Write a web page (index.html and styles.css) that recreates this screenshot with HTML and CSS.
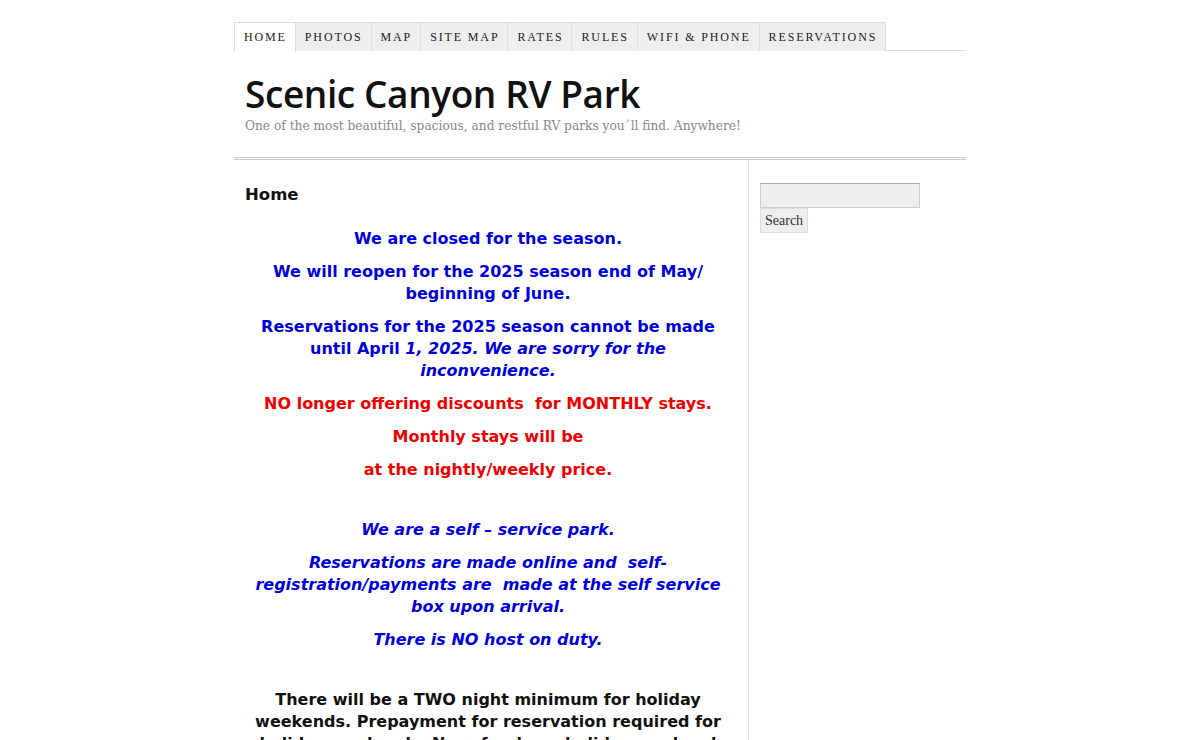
FILE: index.html
```html
<!DOCTYPE html>
<html>
<head>
<meta charset="utf-8">
<title>Scenic Canyon RV Park</title>
<link rel="stylesheet" href="styles.css">
</head>
<body>
<div class="wrap">
  <ul class="nav">
    <li class="active"><a href="#">Home</a></li>
    <li><a href="#">Photos</a></li>
    <li><a href="#">Map</a></li>
    <li><a href="#">Site Map</a></li>
    <li><a href="#">Rates</a></li>
    <li><a href="#">Rules</a></li>
    <li><a href="#">Wifi &amp; Phone</a></li>
    <li><a href="#">Reservations</a></li>
  </ul>
  <header class="header">
    <h1 class="site-title">Scenic Canyon RV Park</h1>
    <p class="tagline">One of the most beautiful, spacious, and restful RV parks you´ll find. Anywhere!</p>
  </header>
  <div class="main">
    <div class="content">
      <h2 class="page-title">Home</h2>
      <div class="entry">
        <p class="blue">We are closed for the season.</p>
        <p class="blue">We will reopen for the 2025 season end of May/ beginning of June.</p>
        <p class="blue">Reservations for the 2025 season cannot be made until April <em>1, 2025. We are sorry for the inconvenience.</em></p>
        <p class="red">NO longer offering discounts&nbsp; for MONTHLY stays.</p>
        <p class="red">Monthly stays will be</p>
        <p class="red">at the nightly/weekly price.</p>
        <p class="spacer">&nbsp;</p>
        <p class="blue"><em>We are a self – service park.</em></p>
        <p class="blue"><em>Reservations are made online and&nbsp; self-registration/payments are&nbsp; made at the self service box upon arrival.</em></p>
        <p class="blue"><em>There is NO host on duty.</em></p>
        <p class="spacer">&nbsp;</p>
        <p class="black">There will be a TWO night minimum for holiday weekends. Prepayment for reservation required for holiday weekends. No refunds on holiday weekend reservations.</p>
      </div>
    </div>
    <aside class="sidebar">
      <form class="search">
        <input class="search-input" type="text">
        <button class="search-btn" type="button">Search</button>
      </form>
    </aside>
  </div>
</div>
</body>
</html>
```
FILE: styles.css
```css
html, body {
  margin: 0;
  padding: 0;
  background: #fff;
}
body {
  font-family: "DejaVu Sans", Verdana, sans-serif;
  color: #111;
}
.wrap {
  width: 732px;
  margin: 0 auto;
  padding-top: 22px;
}
.nav {
  list-style: none;
  margin: 0;
  padding: 0;
  display: flex;
  border-bottom: 1px solid #ddd;
  height: 28px;
}
.nav li {
  border: 1px solid #ddd;
  border-left: none;
  border-bottom: none;
  background: #eee;
  height: 28px;
}
.nav li:first-child {
  border-left: 1px solid #ddd;
}
.nav li.active {
  background: #fff;
  height: 29px;
}
.nav a {
  display: block;
  padding: 0 8px 0 9px;
  line-height: 28px;
  font-family: "Liberation Serif", Georgia, serif;
  font-size: 12px;
  letter-spacing: 1.87px;
  text-transform: uppercase;
  color: #222;
  text-decoration: none;
}
.header {
  padding: 22px 11px 0;
  border-bottom: 1px solid #ccc;
  height: 84px;
}
.site-title {
  margin: 0;
  font-family: "Open Sans", "DejaVu Sans", sans-serif;
  font-weight: 600;
  font-size: 37px;
  line-height: 42px;
  color: #111;
  letter-spacing: -0.4px;
}
.tagline {
  margin: 4px 0 0;
  font-family: "DejaVu Serif", Georgia, serif;
  font-size: 12.2px;
  color: #888;
}
.main {
  display: flex;
  border-top: 1px solid #ccc;
  margin-top: 1px;
}
.content {
  padding: 0 17px 0 11px;
  border-right: 1px solid #ddd;
  width: 486px;
}
.page-title {
  margin: 24px 0 22px;
  font-size: 16.5px;
  line-height: 22px;
  font-weight: bold;
}
.entry p {
  margin: 0 0 11px;
  text-align: center;
  font-weight: bold;
  font-size: 16px;
  line-height: 22px;
}
.entry em {
  font-style: italic;
}
.blue { color: #0000dd; }
.red { color: #ee0000; }
.black { color: #111; }
.entry p.spacer {
  line-height: 16px;
}
.sidebar {
  padding: 23px 11px;
  flex: 1;
}
.search {
  display: flex;
  flex-direction: column;
  align-items: flex-start;
}
.search-input {
  box-sizing: border-box;
  width: 160px;
  height: 25px;
  background: #eee;
  border: 1px solid #ccc;
  border-top-color: #aaa;
  margin: 0;
  padding: 0;
}
.search-btn {
  box-sizing: border-box;
  height: 25px;
  padding: 0 4px;
  background: #eee;
  border: 1px solid #ddd;
  font-family: "Liberation Serif", Georgia, serif;
  font-size: 14px;
  color: #333;
  margin: 0;
}
```
